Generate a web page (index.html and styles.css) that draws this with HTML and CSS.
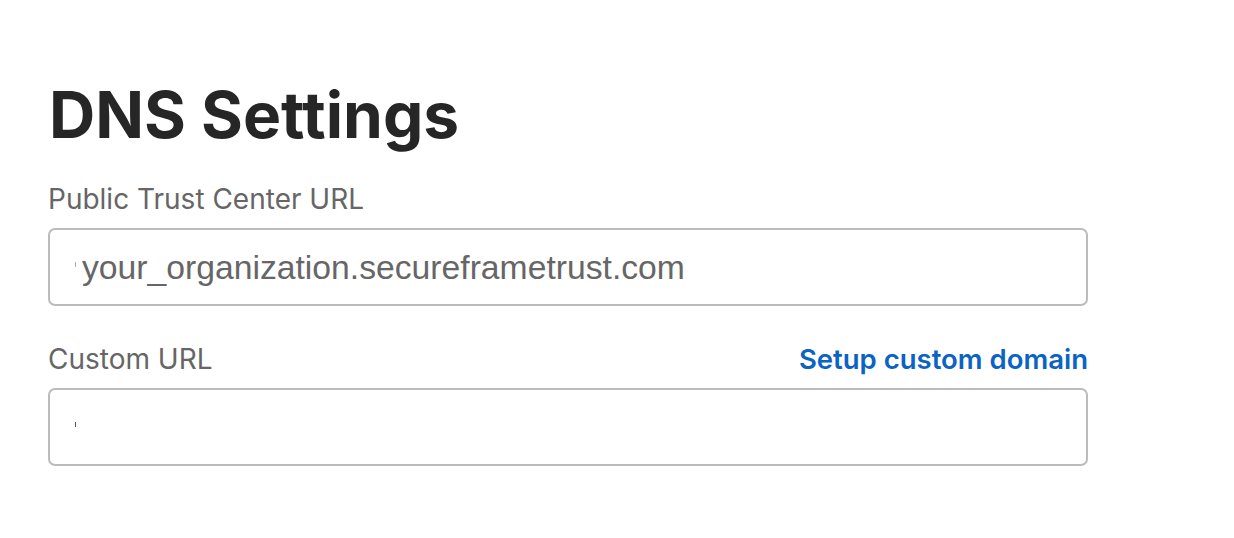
FILE: index.html
```html
<!DOCTYPE html>
<html>
<head>
	<meta charset="utf-8">
	<title>DNS Settings</title>
	<link rel="stylesheet" href="styles.css">
</head>
<body>
<main class="settings">
	<h1>DNS Settings</h1>

	<div class="field">
		<div class="field-head">
			<label for="public-url">Public Trust Center URL</label>
		</div>
		<div class="box" id="public-url">
			<span class="tick"></span>
			<span class="value">your_organization.secureframetrust.com</span>
		</div>
	</div>

	<div class="field">
		<div class="field-head">
			<label for="custom-url">Custom URL</label>
			<a class="link" href="#">Setup custom domain</a>
		</div>
		<div class="box" id="custom-url">
			<span class="tick dark"></span>
		</div>
	</div>
</main>
</body>
</html>
```

FILE: styles.css
```css
body {
	margin: 0;
	background-color: #fff;
	color: #262626;
	font-family: Inter, "Noto Sans", sans-serif;
}

.settings {
	width: 1040px;
	padding: 83px 0 0 48px;
}

h1 {
	font-size: 64px;
	font-weight: 700;
	line-height: 1;
	margin: 0 0 31px 1px;
}

.field {
	margin-bottom: 32px;
}

.field-head {
	display: flex;
	justify-content: space-between;
	align-items: center;
	height: 42px;
	margin-bottom: 8px;
}

label {
	font-size: 28px;
	color: #666;
}

.link {
	font-size: 27.5px;
	font-weight: 600;
	color: #0b63c5;
	text-decoration: none;
}

.box {
	display: flex;
	align-items: center;
	box-sizing: border-box;
	height: 78px;
	border: 2px solid #bbb;
	border-radius: 7px;
	padding: 0 0 0 25px;
}

.tick {
	display: inline-block;
	width: 1px;
	height: 5px;
	margin: -5px 6px 0 0;
	background: #aaa;
}

.tick.dark {
	background: #555;
}

.value {
	font-family: "Liberation Sans", Arial, sans-serif;
	font-size: 33.7px;
	color: #666;
}
```
